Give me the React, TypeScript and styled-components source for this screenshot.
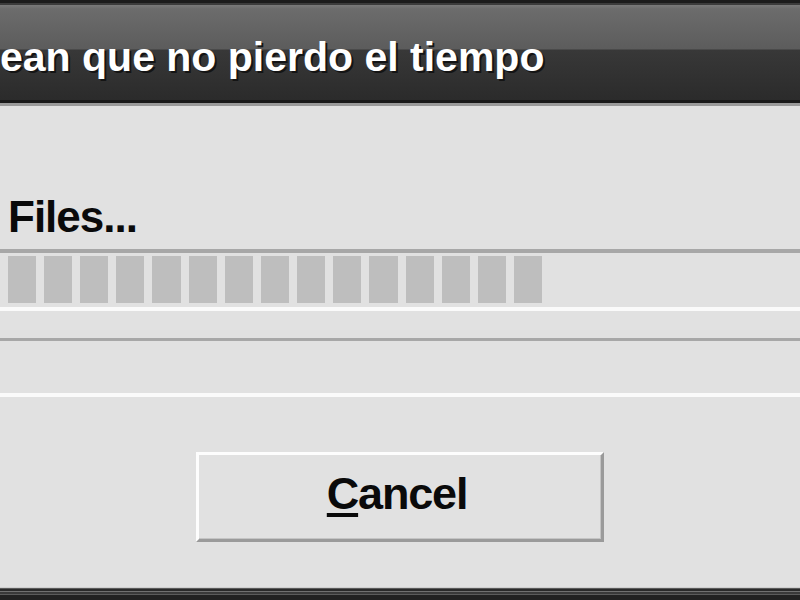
import styled, { createGlobalStyle } from "styled-components";

const GlobalStyle = createGlobalStyle`
  html, body {
    margin: 0;
    padding: 0;
    background: #e1e1e1;
    overflow: hidden;
  }
  #root {
    width: 800px;
    height: 600px;
  }
`;

const BLOCKS = 16;

export default function App() {
  return (
    <>
      <GlobalStyle />
      <Window>
        <TitleBar>
          <TitleText>ean que no pierdo el tiempo</TitleText>
        </TitleBar>
        <Body>
          <Label>Files...</Label>
          <ProgressFrame>
            <BlockStrip>
              {Array.from({ length: BLOCKS }).map((_, i) => (
                <Block key={i} />
              ))}
            </BlockStrip>
          </ProgressFrame>
          <StatusField />
          <ButtonRow>
            <Button type="button">
              <Mnemonic>C</Mnemonic>ancel
            </Button>
          </ButtonRow>
        </Body>
        <BottomEdge />
      </Window>
    </>
  );
}

const Window = styled.div`
  width: 800px;
  height: 600px;
  display: flex;
  flex-direction: column;
  background: #e1e1e1;
  overflow: hidden;
`;

const TitleBar = styled.div`
  height: 97px;
  border-top: 3px solid #1c1c1c;
  border-bottom: 3px solid #1a1a1a;
  background: linear-gradient(
    to bottom,
    #3c3c3c 0,
    #3c3c3c 2px,
    #7a7a7a 2px,
    #6c6c6c 6px,
    #5c5c5c 46px,
    #383838 47px,
    #2b2b2b 100%
  );
  display: flex;
  align-items: flex-start;
`;

const TitleText = styled.div`
  padding-top: 34px;
  font-family: "Liberation Sans", Arial, sans-serif;
  font-weight: bold;
  font-size: 41px;
  line-height: 41px;
  color: #ffffff;
  white-space: nowrap;
  text-shadow: 2px 2px 0 #141414;
`;

const Body = styled.div`
  flex: 1;
  display: flex;
  flex-direction: column;
  border-top: 3px solid #9a9a9a;
  background: #e1e1e1;
`;

const Label = styled.div`
  margin-top: 89px;
  padding-left: 8px;
  font-family: "Liberation Sans", Arial, sans-serif;
  font-weight: bold;
  font-size: 44px;
  line-height: 44px;
  letter-spacing: -1px;
  color: #0a0a0a;
`;

const ProgressFrame = styled.div`
  margin-top: 10px;
  height: 47px;
  padding: 3px 0 4px;
  border-top: 4px solid #a7a7a7;
  border-bottom: 4px solid #fafafa;
  overflow: hidden;
`;

const BlockStrip = styled.div`
  display: flex;
  gap: 8px;
  height: 100%;
  margin-left: -28.6px;
`;

const Block = styled.div`
  flex: 0 0 28.2px;
  height: 100%;
  background: #bebebe;
`;

const StatusField = styled.div`
  margin-top: 27px;
  height: 52px;
  border-top: 3px solid #a7a7a7;
  border-bottom: 4px solid #fafafa;
`;

const ButtonRow = styled.div`
  margin-top: 55px;
  display: flex;
  justify-content: center;
`;

const Button = styled.button`
  width: 408px;
  height: 90px;
  box-sizing: border-box;
  padding: 0 6px 7px 0;
  border-style: solid;
  border-width: 3px;
  border-color: #fdfdfd #9a9a9a #9a9a9a #fdfdfd;
  box-shadow: inset -1px -1px 0 #c4c4c4;
  background: #e1e1e1;
  display: flex;
  align-items: center;
  justify-content: center;
  font-family: "Liberation Sans", Arial, sans-serif;
  font-weight: bold;
  font-size: 45px;
  line-height: 45px;
  letter-spacing: -1.2px;
  color: #0a0a0a;
`;

const Mnemonic = styled.span`
  text-decoration: underline;
  text-decoration-thickness: 4px;
  text-underline-offset: 4px;
`;

const BottomEdge = styled.div`
  height: 13px;
  background: linear-gradient(
    to bottom,
    #cfcfcf 0 1px,
    #5a5a5a 1px 2px,
    #2a2a2a 2px 4px,
    #717171 4px 5px,
    #3a3a3a 5px 7px,
    #5c5c5c 7px 8px,
    #222222 8px 13px
  );
`;
